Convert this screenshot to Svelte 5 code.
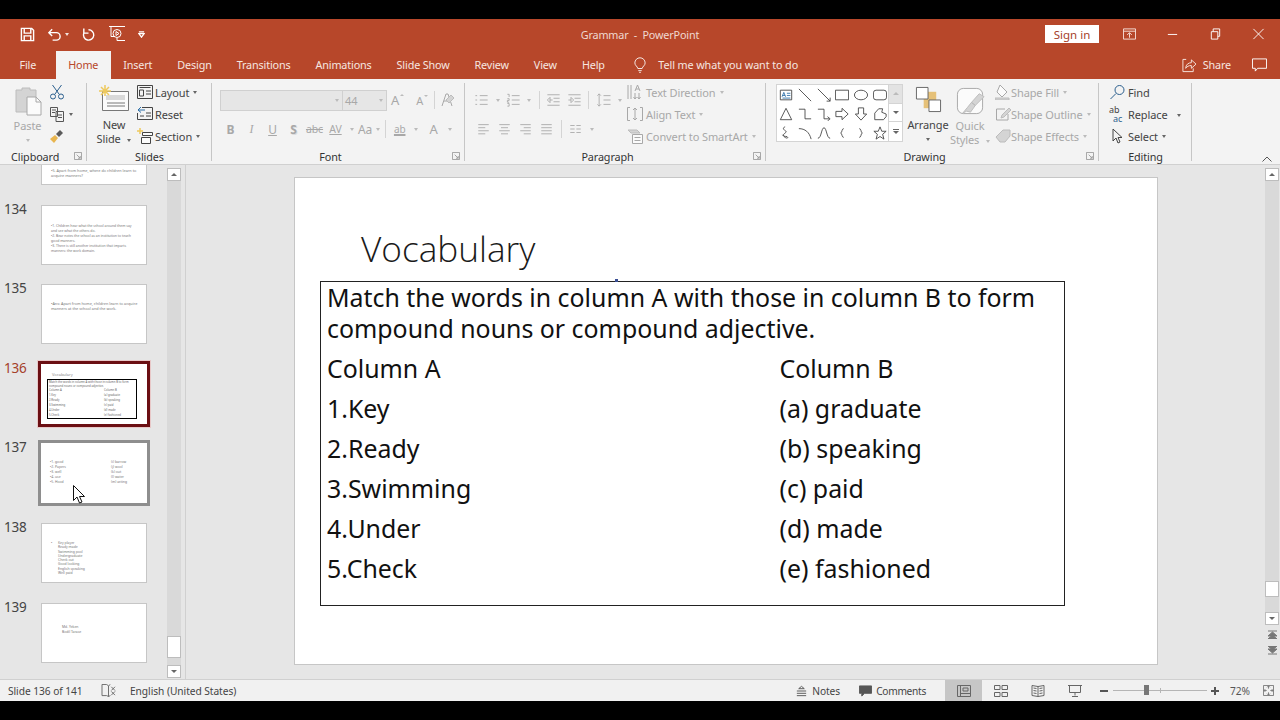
<script lang="ts">
  const tabs = ['File', 'Home', 'Insert', 'Design', 'Transitions', 'Animations', 'Slide Show', 'Review', 'View', 'Help'];
  const colA = ['Column A', '1.Key', '2.Ready', '3.Swimming', '4.Under', '5.Check'];
  const colB = ['Column B', '(a) graduate', '(b) speaking', '(c) paid', '(d) made', '(e) fashioned'];
</script>

{#snippet caret()}<i class="caret"></i>{/snippet}
{#snippet launcher()}
  <svg class="launch" viewBox="0 0 9 9"><path d="M.5.5h8v8h-8zM3 3l4 4M7 4.5V7H4.5" /></svg>
{/snippet}

<div class="band"></div>
<div class="app">
  <header class="titlebar">
    <div class="qat">
      <svg class="q" viewBox="0 0 16 16"><path d="M1.500 1.500h11l2 2v11h-13zM4.500 1.500v5h7v-5M4.500 14.500v-5h7v5" /></svg>
      <svg class="q undo" viewBox="0 0 16 16"><path d="M2 6h8a4 4 0 0 1 0 8H6M5.500 2.500 2 6l3.500 3.500" /></svg>
      <i class="caret light"></i>
      <svg class="q redo" viewBox="0 0 16 16"><path d="M8 3a5.500 5.500 0 1 1-5 3.500M3 1.500v5h5" /></svg>
      <svg class="q show" viewBox="0 0 18 18"><path d="M1 1.500h16M3 1.500v10h4M9 15.500h8M9 13v2.500M13 8.500a4 4 0 1 1-8 0 4 4 0 0 1 8 0zM8 6.500l3 2-3 2z" /></svg>
      <svg class="q cust" viewBox="0 0 8 8"><path d="M1 1h6M1 3h6L4 7z" /></svg>
    </div>
    <div class="doc">Grammar &nbsp;-&nbsp; PowerPoint</div>
    <div class="winctl">
      <button class="signin">Sign in</button>
      <svg class="w first" viewBox="0 0 14 12"><path d="M.5.500h13v11H.5zM.5 3h13M7 10V5M4.500 7 7 4.500 9.500 7" /></svg>
      <svg class="w" viewBox="0 0 14 12"><path d="M2 6.500h10" /></svg>
      <svg class="w" viewBox="0 0 14 12"><path d="M2.500 3.500h7v8h-7zM4.500 3.500v-3h7v8h-2" /></svg>
      <svg class="w" viewBox="0 0 14 12"><path d="M1.500.5 12.500 11.500M12.500.5 1.500 11.500" /></svg>
    </div>
  </header>

  <nav class="tabs">
    {#each tabs as t}
      <span class="tab" class:active={t === 'Home'}>{t}</span>
    {/each}
    <svg class="bulb" viewBox="0 0 14 18"><path d="M4.500 12.500C4 10 1 9 1 6a6 6 0 0 1 12 0c0 3-3 4-3.500 6.500zM5 15h4M6 17h2" /></svg>
    <span class="tell">Tell me what you want to do</span>
    <svg class="share" viewBox="0 0 16 16"><path d="M5 1.500H1.500v13h11V11M4.500 11c0-4 3-6 6-6V2l5 4.500-5 4.500V8c-3 0-4.500 1-6 3z" /></svg>
    <span class="sharetxt">Share</span>
    <svg class="talk" viewBox="0 0 16 14"><path d="M.5.500h15v10H6L3.500 13.500v-3h-3z" /></svg>
  </nav>

  <div class="ribbon">
    <section class="group clip">
      <div class="body">
        <div class="paste off">
          <svg class="big" viewBox="0 0 28 30">
            <path class="fillg" d="M2 4h6V2h8v2h6v22H2z" />
            <path class="fillw" d="M13 11h9l5 5v13H13z" />
            <path d="M22 11v5h5" />
          </svg>
          <span>Paste</span>
          {@render caret()}
        </div>
        <div class="stack">
          <div class="row"><svg class="i16 blue" viewBox="0 0 16 16"><path d="M3.500 1 10 10M12.500 1 6 10M6.500 12.500a2.500 2.500 0 1 1-5 0 2.500 2.500 0 0 1 5 0zM14.500 12.500a2.500 2.500 0 1 1-5 0 2.500 2.500 0 0 1 5 0z" /></svg></div>
          <div class="row"><svg class="i16" viewBox="0 0 16 16"><path d="M1.500 1.500h7v9h-7zM7 5.500h7.500v10H7zM3 4h4M3 6.500h3M9 9h4M9 11.500h4" /></svg>{@render caret()}</div>
          <div class="row"><svg class="i16" viewBox="0 0 16 16"><path class="fillgold" d="M1 11l5-4 3 3-4 5z" /><path class="filldark" d="M7 6l4-4 3 3-4 4z" /></svg></div>
        </div>
      </div>
      <div class="label"><span>Clipboard</span>{@render launcher()}</div>
    </section>

    <section class="group slides">
      <div class="body">
        <div class="newslide">
          <svg class="big wide" viewBox="0 0 30 26">
            <path class="fillw" d="M3.500 6.500h26v19h-26z" />
            <path class="fillg2" d="M7 10h19v5H7z" />
            <path d="M8 18h18M8 21h18" />
            <path class="sun" d="M6 0v11M0 6h12M2 2l8 8M10 2l-8 8" />
          </svg>
          <span>New</span>
          <span>Slide {@render caret()}</span>
        </div>
        <div class="stack">
          <div class="row"><svg class="i16" viewBox="0 0 16 16"><path d="M.5 1.500h15v13H.5zM2.500 3.500h11M2.500 6v6h4V6zM9 7h5M9 10h5" /></svg><span class="t">Layout</span>{@render caret()}</div>
          <div class="row"><svg class="i16" viewBox="0 0 16 16"><path class="blueline" d="M1 4l3-3M1 4l3 2.500M1 4h7" /><path d="M5 1.500h10.500v12H.5V7M3 10h4M9 7h5M9 10h5" /></svg><span class="t">Reset</span></div>
          <div class="row"><svg class="i16" viewBox="0 0 16 16"><path class="sun" d="M3 0v6M0 3h6" /><path class="fillw" d="M5.500 4.500h10v3h-10zM4.500 9.500h9v6h-9z" /></svg><span class="t">Section</span>{@render caret()}</div>
        </div>
      </div>
      <div class="label">Slides</div>
    </section>

    <section class="group font off">
      <div class="body col">
        <div class="row">
          <div class="field name"><i class="caret"></i></div>
          <div class="field size"><span>44</span><i class="caret"></i></div>
          <span class="grow up">A<i class="tri"></i></span>
          <span class="grow down">A<i class="tri dn"></i></span>
          <i class="vsep a"></i>
          <svg class="i16 clear" viewBox="0 0 16 16"><path d="M3 14 7 2h2l4 12M5 9h6" /><path class="fillg" d="M7 8l5-5 3 3-5 5z" /></svg>
        </div>
        <div class="row fmt">
          <b class="s">B</b><em class="s it">I</em><u class="s">U</u><span class="s shadow">S</span>
          <span class="s abc">abc</span>
          <span class="s av">AV</span>{@render caret()}
          <span class="aa">Aa</span>{@render caret()}
          <i class="vsep b"></i>
          <span class="s hl">ab</span>{@render caret()}
          <span class="s bigA">A</span>{@render caret()}
        </div>
      </div>
      <div class="label shifted"><span>Font</span>{@render launcher()}</div>
    </section>

    <section class="group para off">
      <div class="body">
        <div class="paraleft">
          <div class="row">
            <svg class="s17" viewBox="0 0 16 16"><path d="M6 3h9M6 8h9M6 13h9M1 3h2M1 8h2M1 13h2" /></svg><i class="cw16">{@render caret()}</i>
            <svg class="s17" viewBox="0 0 16 16"><path d="M6 3h9M6 8h9M6 13h9M1 1.500h2v3M1 6.500h2v2H1v2h2M1 12h2v3H1" /></svg><i class="cw14">{@render caret()}</i>
            <i class="vsep c"></i>
            <svg class="s21" viewBox="0 0 16 16"><path d="M1 2h14M8 6h7M8 10h7M1 14h14M1 8l3-3v6zM4 8h3" /></svg>
            <svg class="s21" viewBox="0 0 16 16"><path d="M1 2h14M8 6h7M8 10h7M1 14h14M7 8 4 5v6zM1 8h3" /></svg>
            <i class="vsep d"></i>
            <svg class="s21 ml" viewBox="0 0 16 16"><path d="M8 3h8M8 8h8M8 13h8M3 1v14M1 3l2-2 2 2M1 13l2 2 2-2" /></svg><i class="cw14">{@render caret()}</i>
          </div>
          <div class="row low">
            <svg class="s21" viewBox="0 0 16 16"><path d="M2 3h12M2 6.500h8M2 10h12M2 13.500h8" /></svg>
            <svg class="s21" viewBox="0 0 16 16"><path d="M2 3h12M4 6.500h8M2 10h12M4 13.500h8" /></svg>
            <svg class="s21" viewBox="0 0 16 16"><path d="M2 3h12M6 6.500h8M2 10h12M6 13.500h8" /></svg>
            <svg class="s21" viewBox="0 0 16 16"><path d="M2 3h12M2 6.500h12M2 10h12M2 13.500h12" /></svg>
            <i class="vsep e"></i>
            <svg class="s21" viewBox="0 0 16 16"><path d="M2 4h5M9 4h5M2 8h5M9 8h5M2 12h5M9 12h5" /></svg>
            {@render caret()}
          </div>
        </div>
        <div class="stack pstack">
          <div class="row"><svg class="i16" viewBox="0 0 16 16"><path d="M1 1v14M4 1v14M8 9v6M6.500 13 8 15l1.500-2M12 9v6M10.500 13l1.500 2 1.500-2M8 7l2.500-6L13 7M9 5h3" /></svg><span class="t">Text Direction</span>{@render caret()}</div>
          <div class="row"><svg class="i16" viewBox="0 0 16 16"><path d="M3 1.500H.5v13H3M13 1.500h2.500v13H13M8 2v12M6 4l2-2 2 2M6 12l2 2 2-2" /></svg><span class="t">Align Text</span>{@render caret()}</div>
          <div class="row"><svg class="i16" viewBox="0 0 16 16"><path class="fillg" d="M1 2h9l3 3H4z" /><path class="fillw" d="M5.500 6.500h10v9h-10z" /><path d="M7.500 9.500h6M7.500 12.500h6" /></svg><span class="t">Convert to SmartArt</span>{@render caret()}</div>
        </div>
      </div>
      <div class="label shifted"><span>Paragraph</span>{@render launcher()}</div>
    </section>

    <section class="group draw">
      <div class="body">
        <div class="gallery">
          <div class="shapes">
            <svg viewBox="0 0 16 16"><path d="M1.500 2.500h13v11h-13z" /><path class="blueline" d="M3.500 10 5.500 5l2 5M4 8.500h3M9 6h4M9 8.500h4M4 11.500h9" /></svg>
            <svg viewBox="0 0 16 16"><path d="M1 1l14 14" /></svg>
            <svg viewBox="0 0 16 16"><path d="M1 1l14 14M15 11v4h-4" /></svg>
            <svg viewBox="0 0 16 16"><path d="M.5 2.500h15v11H.5z" /></svg>
            <svg viewBox="0 0 16 16"><ellipse cx="8" cy="8" rx="7.500" ry="5.500" /></svg>
            <svg viewBox="0 0 16 16"><rect x=".5" y="2.500" width="15" height="11" rx="3" /></svg>
            <svg viewBox="0 0 16 16"><path d="M8 1.500l6.500 13h-13z" /></svg>
            <svg viewBox="0 0 16 16"><path d="M1 2.500h7v11h7" /></svg>
            <svg viewBox="0 0 16 16"><path d="M1 2.500h7v11h6M12 11l3 2.500-3 2.500" /></svg>
            <svg viewBox="0 0 16 16"><path d="M1 5h7V1.500L15 8l-7 6.500V11H1z" /></svg>
            <svg viewBox="0 0 16 16"><path d="M5 1h6v7h3.500L8 15 1.500 8H5z" /></svg>
            <svg viewBox="0 0 16 16"><path d="M2 14.500V7L6.500 2H11l-1 4 5 2v3l-3 3.500z" /></svg>
            <svg viewBox="0 0 16 16"><path d="M7 1C3 2 6 5 8 6S4 9 5 11s5 4 5 2-5 0-6-3" /></svg>
            <svg viewBox="0 0 16 16"><path d="M1 3c7 0 12 4 14 12" /></svg>
            <svg viewBox="0 0 16 16"><path d="M1 14C5 14 5 2 8 2s3 12 7 12" /></svg>
            <svg viewBox="0 0 16 16"><path d="M10 3C7.500 3 8.500 7 6.500 8c2 1 1 5 3.500 5" /></svg>
            <svg viewBox="0 0 16 16"><path d="M6 3c2.500 0 1.500 4 3.500 5-2 1-1 5-3.500 5" /></svg>
            <svg viewBox="0 0 16 16"><path d="M8 1l2 5h5l-4 3.500 1.500 5.500L8 12l-4.500 3L5 9.500 1 6h5z" /></svg>
          </div>
          <div class="scroller">
            <span class="sc dim"><i class="tri"></i></span>
            <span class="sc"><i class="tri dn"></i></span>
            <span class="sc more"><i class="bar"></i><i class="tri dn"></i></span>
          </div>
        </div>
        <div class="arrange">
          <svg class="big arr" viewBox="0 0 28 28">
            <path class="gold" d="M9 6h13v17H9z" />
            <path class="fillw2" d="M1.500 1.500h12v12h-12zM14.500 14.500h12v12h-12z" />
          </svg>
          <span>Arrange</span>
          {@render caret()}
        </div>
        <div class="quick off">
          <svg class="big qs" viewBox="0 0 30 30"><rect class="fillw" x="1.500" y="1.500" width="26" height="26" rx="6" /><path class="fillg" d="M29 10l-9 9-4-3 8-9zM16 16l4 3-5 7-4-1-4 2 5-6z" /></svg>
          <span>Quick</span>
          <span>Styles {@render caret()}</span>
        </div>
        <div class="stack shape off">
          <div class="row"><svg class="i16" viewBox="0 0 16 16"><path class="fillw" d="M5 1l7 7-5 5-5-5z" /><path class="fillg" d="M0 14h14v2H0z" /></svg><span class="t">Shape Fill</span>{@render caret()}</div>
          <div class="row"><svg class="i16" viewBox="0 0 16 16"><path d="M10 3H1.500v11H13V8" /><path class="fillg" d="M7 9l7-7 2 2-7 7-3 1z" /></svg><span class="t">Shape Outline</span>{@render caret()}</div>
          <div class="row"><svg class="i16" viewBox="0 0 16 16"><path class="fillg" d="M1 9l7-7h7v6l-5 6H5z" /></svg><span class="t">Shape Effects</span>{@render caret()}</div>
        </div>
      </div>
      <div class="label shifted"><span>Drawing</span>{@render launcher()}</div>
    </section>

    <section class="group edit">
      <div class="body">
        <div class="stack">
          <div class="row"><svg class="i16 blue" viewBox="0 0 16 16"><path d="M15 6a4.500 4.500 0 1 1-9 0 4.500 4.500 0 0 1 9 0zM7 9.500 1.500 15" /></svg><span class="t">Find</span></div>
          <div class="row"><span class="abac"><span>ab</span><span class="ac">ac</span></span><span class="t">Replace</span><span class="gapc">{@render caret()}</span></div>
          <div class="row"><svg class="i16" viewBox="0 0 16 16"><path d="M4 1v12l3-3 2 5 2-1-2-4.500h4z" /></svg><span class="t">Select</span>{@render caret()}</div>
        </div>
      </div>
      <div class="label">Editing</div>
    </section>

    <svg class="collapse" viewBox="0 0 10 6"><path d="M.5 5.500 5 1l4.500 4.500" /></svg>
  </div>

  <main class="work">
    <aside class="pane">
      <div class="list">
        <div class="item">
          <div class="thumb"><p class="tiny low">•5. Apart from home, where do children learn to<br />acquire manners?</p></div>
        </div>
        <div class="item">
          <span class="num">134</span>
          <div class="thumb"><p class="tiny top">•1. Children hear what the school around them say and see what the others do.<br />•2. Bear notes the school as an institution to teach good manners.<br />•3. There is still another institution that imparts manners: the work domain.</p></div>
        </div>
        <div class="item">
          <span class="num">135</span>
          <div class="thumb"><p class="tiny mid">•Ans: Apart from home, children learn to acquire manners at the school and the work.</p></div>
        </div>
        <div class="item current">
          <span class="num">136</span>
          <div class="thumb">
            <p class="mini-title">Vocabulary</p>
            <div class="mini-box">
              <p>Match the words in column A with those in column B to form compound nouns or compound adjective.</p>
              <div class="mini-grid">
                {#each colA as a, i}
                  <span>{a}</span><span>{colB[i]}</span>
                {/each}
              </div>
            </div>
          </div>
        </div>
        <div class="item hover">
          <span class="num">137</span>
          <div class="thumb two">
            <p class="tiny">•1. good<br />•2. Papers<br />•3. well<br />•4. use<br />•5. Hood</p>
            <p class="tiny">(i) barrow<br />(j) wool<br />(k) out<br />(l) water<br />(m) acting</p>
          </div>
        </div>
        <div class="item">
          <span class="num">138</span>
          <div class="thumb"><p class="tiny list138">Key player<br />Ready made<br />Swimming pool<br />Undergraduate<br />Check out<br />Good looking<br />English speaking<br />Well paid</p></div>
        </div>
        <div class="item">
          <span class="num">139</span>
          <div class="thumb"><p class="tiny list139">Md. Yeken<br />Bodil Tarase</p></div>
        </div>
      </div>
      <div class="vscroll pane-scroll">
        <span class="sb"><i class="tri"></i></span>
        <span class="fill"></span>
        <span class="knob"></span>
        <span class="sb down"><i class="tri dn"></i></span>
      </div>
    </aside>
    <div class="split"></div>

    <div class="stage">
      <article class="slide">
        <h1>Vocabulary</h1>
        <div class="box">
          <i class="handle"></i>
          <p class="intro">Match the words in column A with those in column B to form compound nouns or compound adjective.</p>
          <div class="cols">
            {#each colA as a, i}
              <span>{a}</span><span>{colB[i]}</span>
            {/each}
          </div>
        </div>
      </article>
      <div class="vscroll main-scroll">
        <span class="sb"><i class="tri"></i></span>
        <span class="fill"></span>
        <span class="knob"></span>
        <span class="fill short"></span>
        <span class="sb down"><i class="tri dn"></i></span>
        <svg class="pg" viewBox="0 0 9 9"><path d="M0 1h9M0 6l4.500-4L9 6zM0 9l4.500-4L9 9z" /></svg>
        <svg class="pg" viewBox="0 0 9 9"><path d="M0 8h9M0 3l4.500 4L9 3zM0 0l4.500 4L9 0z" /></svg>
      </div>
    </div>
  </main>

  <footer class="status">
    <span class="count">Slide 136 of 141</span>
    <svg class="book" viewBox="0 0 16 14"><path d="M1 .5h5l2 1.500v11.500L6 12.500H1zM8 2l2-1.500M8 13.500l2-1M11 3l4 4M15 3l-4 4M11 8l4 4M15 8l-4 4" /></svg>
    <span class="lang">English (United States)</span>
    <span class="notes"><svg class="st" viewBox="0 0 14 12"><path d="M2 11h10M2 8.500h10M2 6h10M4 3.500 7 1l3 2.500z" /></svg>Notes</span>
    <span class="comments"><svg class="st fillst" viewBox="0 0 14 12"><path d="M.5.500h13v8H6l-3 3v-3H.5z" /></svg>Comments</span>
    <span class="view on"><svg viewBox="0 0 14 12"><path d="M.5.500h13v11H.5zM3.500.5v11M3.500 8.500h10M6 3h5v3H6z" /></svg></span>
    <span class="view"><svg viewBox="0 0 14 12"><path d="M.5.500h5.500v4H.5zM8 .5h5.500v4H8zM.5 7.500h5.500v4H.5zM8 7.500h5.500v4H8z" /></svg></span>
    <span class="view"><svg viewBox="0 0 14 12"><path d="M7 1.500v10M7 1.500 1 .5v10l6 1 6-1V.5zM2.500 3 5.500 3.500M2.500 5.500l3 .5M2.500 8l3 .5M8.500 3.500l3-.5M8.500 6l3-.5M8.500 8.500l3-.5" /></svg></span>
    <span class="view"><svg viewBox="0 0 14 12"><path d="M0 .5h14M1.500.5v7h11v-7M7 7.500v3M4 11.500h6" /></svg></span>
    <span class="zoom-minus"></span>
    <span class="slider"><i class="mid"></i><i class="thumbz"></i></span>
    <span class="zoom-plus"></span>
    <span class="pct">72%</span>
    <svg class="fit" viewBox="0 0 12 12"><path d="M.5.500h11v11H.5zM6 1v3M4.500 2.500 6 1l1.500 1.500M6 11V8M4.500 9.500 6 11l1.500-1.500M1 6h3M2.500 4.500 1 6l1.500 1.500M11 6H8M9.500 4.500 11 6 9.500 7.500" /></svg>
  </footer>
</div>
<div class="band"></div>

<svg class="cursor" viewBox="0 0 12 19"><path d="M.5.500v15l3.500-3.500 2.500 6 2.500-1-2.500-5.500h5z" /></svg>

<style>
  :global(body) {
    background: #000;
    font-family: 'Noto Sans', 'Open Sans', sans-serif;
    overflow: hidden;
  }

  .band {
    height: 19px;
    background: #000;
  }

  .app {
    height: 682px;
    display: flex;
    flex-direction: column;
    background: #e6e6e6;
    color: #444;
    font-size: 11px;
    letter-spacing: -0.1px;
  }

  svg {
    fill: none;
    stroke: currentColor;
    stroke-width: 1;
    flex: none;
  }

  p {
    margin: 0;
  }

  /* title bar */
  .titlebar {
    height: 32px;
    box-sizing: border-box;
    padding-bottom: 2px;
    display: grid;
    grid-template-columns: 1fr auto 1fr;
    align-items: center;
    background: #b7472a;
    color: #f3e3dd;
  }

  .qat {
    display: flex;
    align-items: center;
    padding-left: 20px;
  }

  .q {
    width: 15px;
    height: 15px;
    color: #fff;
    stroke-width: 1.500;
  }

  .undo {
    margin-left: 12px;
  }

  .redo {
    margin-left: 12px;
  }

  .show {
    margin-left: 12px;
    width: 18px;
    height: 18px;
    stroke-width: 1;
  }

  .cust {
    width: 7px;
    height: 7px;
    margin-left: 12px;
  }

  .doc {
    font-size: 10.800px;
    letter-spacing: -0.15px;
    color: #f0d9d1;
  }

  .winctl {
    display: flex;
    align-items: center;
    justify-content: flex-end;
  }

  .signin {
    width: 54px;
    height: 18px;
    margin-right: 24px;
    padding: 0;
    border: 0;
    background: #fff;
    color: #a5412a;
    font: inherit;
    font-size: 11.500px;
  }

  .w {
    width: 13px;
    height: 12px;
    margin-right: 30px;
    color: #fff;
  }

  .w.first {
    color: #f7e3dc;
  }

  .w:last-child {
    margin-right: 15px;
  }

  /* tabs */
  .tabs {
    height: 28px;
    display: flex;
    align-items: stretch;
    padding-left: 7px;
    background: #b7472a;
    color: #f6e6e0;
    font-size: 10.800px;
    letter-spacing: -0.15px;
  }

  .tab {
    display: flex;
    align-items: center;
    padding: 0 12.500px 1px;
  }

  .tab:first-child {
    margin-right: 7px;
  }

  .tab.active {
    background: #f3f3f3;
    color: #b7472a;
  }

  .bulb {
    width: 12px;
    height: 17px;
    align-self: center;
    margin-left: 17px;
    color: #fff;
  }

  .tell {
    align-self: center;
    margin-left: 12px;
    padding-bottom: 1px;
    letter-spacing: -0.1px;
  }

  .share {
    width: 16px;
    height: 15px;
    align-self: center;
    margin-left: auto;
  }

  .sharetxt {
    align-self: center;
    margin-left: 6px;
    padding-bottom: 1px;
  }

  .talk {
    width: 15px;
    height: 14px;
    align-self: center;
    margin-left: 21px;
    margin-right: 13px;
    color: #fff;
  }

  /* ribbon */
  .ribbon {
    height: 86px;
    display: flex;
    position: relative;
    background: #f3f3f3;
    border-bottom: 1px solid #d0d0d0;
    box-sizing: border-box;
    flex: none;
  }

  .group {
    position: relative;
    padding-top: 1px;
    box-sizing: border-box;
    height: 85px;
  }

  .group::after {
    content: '';
    position: absolute;
    right: 0;
    top: 4px;
    bottom: 3px;
    width: 1px;
    background: #c6c6c6;
  }

  .clip { width: 87px; }
  .slides { width: 125px; }
  .font { width: 253px; }
  .para { width: 301px; }
  .draw { width: 333px; }
  .edit { width: 93px; }

  .body {
    height: 67px;
    display: flex;
  }

  .body.col {
    flex-direction: column;
  }

  .stack {
    padding-top: 1px;
  }

  .label {
    height: 18px;
    display: flex;
    align-items: center;
    justify-content: center;
    position: relative;
    color: #333;
    font-size: 10.800px;
  }

  .label.shifted {
    padding-right: 16px;
  }

  .clip .label {
    justify-content: flex-start;
    padding-left: 11px;
  }

  .font .label span,
  .para .label span {
    color: #333;
  }

  .launch {
    position: absolute;
    right: 5px;
    top: 5px;
    width: 8px;
    height: 8px;
    color: #999;
  }

  .row {
    height: 22px;
    display: flex;
    align-items: center;
    white-space: nowrap;
  }

  .t {
    margin-left: 3px;
  }

  .off {
    color: #a8a8a8;
  }

  .caret {
    display: inline-block;
    width: 0;
    height: 0;
    margin-left: 4px;
    border: 2.500px solid transparent;
    border-top: 3px solid #666;
    border-bottom: 0;
    vertical-align: middle;
  }

  .off .caret {
    border-top-color: #bbb;
  }

  .caret.light {
    border-top-color: #f3e3dd;
    margin-left: 3px;
  }

  .i16 {
    width: 16px;
    height: 16px;
  }

  .blue {
    color: #2b5f8e;
  }

  .big {
    display: block;
  }

  .fillg {
    fill: #d4d4d4;
    stroke: #bcbcbc;
  }

  .fillg2 {
    fill: #d9d9d9;
    stroke: none;
  }

  .fillw {
    fill: #fbfbfb;
  }

  .fillw2 {
    fill: #fff;
    stroke: #666;
  }

  .fillgold {
    fill: #e8b54f;
    stroke: none;
  }

  .filldark {
    fill: #5a5a5a;
    stroke: none;
  }

  .gold {
    fill: #e6c178;
    stroke: none;
  }

  .sun {
    stroke: #eec95c;
    stroke-width: 1.500;
  }

  .blueline {
    stroke: #2b6ea8;
  }

  /* clipboard */
  .clip .body {
    padding-left: 13px;
  }

  .paste {
    width: 29px;
    display: flex;
    flex-direction: column;
    align-items: center;
    color: #a8a8a8;
    padding-top: 6px;
    line-height: 14px;
  }

  .paste .big {
    width: 28px;
    height: 30px;
    margin-bottom: 3px;
  }

  .paste .caret {
    margin: 6px 0 0;
  }

  .clip .stack {
    margin-left: 7px;
  }

  .clip .row .i16 {
    margin-left: 0;
    color: #555;
  }

  .clip .row .blue {
    color: #2b5f8e;
  }

  /* slides */
  .slides .body {
    padding-left: 11px;
  }

  .newslide {
    width: 32px;
    display: flex;
    flex-direction: column;
    align-items: center;
    padding-top: 5px;
    line-height: 14px;
    white-space: nowrap;
    color: #444;
  }

  .wide {
    width: 30px;
    height: 26px;
    margin-bottom: 7px;
    color: #777;
  }

  .slides .stack {
    margin-left: 7px;
  }

  .slides .t {
    margin-left: 2px;
  }

  /* font */
  .font .body {
    padding: 9px 0 0 8px;
    box-sizing: border-box;
  }

  .field {
    height: 21px;
    box-sizing: border-box;
    border: 1px solid #d0d0d0;
    background: #e6e6e6;
    display: flex;
    align-items: center;
    justify-content: flex-end;
    padding-right: 3px;
  }

  .field.name {
    width: 123px;
  }

  .field.size {
    width: 44px;
    border-left: 0;
    justify-content: space-between;
    padding-left: 2px;
  }

  .grow {
    position: relative;
    font-size: 13px;
    line-height: 1;
  }

  .grow.up {
    margin-left: 4px;
  }

  .grow.down {
    margin-left: 12px;
    font-size: 11px;
  }

  .tri {
    display: inline-block;
    width: 0;
    height: 0;
    border: 3px solid transparent;
    border-bottom: 3px solid #666;
    border-top: 0;
  }

  .tri.dn {
    border-bottom: 0;
    border-top: 3px solid #666;
  }

  .grow .tri {
    border-bottom-color: #bbb;
    border-width: 0 2px 2px;
    vertical-align: top;
    margin-left: 1px;
  }

  .grow .tri.dn {
    border-top-color: #bbb;
    border-width: 2px 2px 0;
  }

  .vsep {
    display: block;
    width: 1px;
    height: 18px;
    background: #d4d4d4;
    flex: none;
  }

  .vsep.a {
    margin-left: 6px;
  }

  .clear {
    margin-left: 4px;
  }

  .fmt {
    margin-top: 7px;
  }

  .s {
    width: 21px;
    text-align: center;
    font-style: normal;
    flex: none;
    font-size: 12px;
  }

  .it {
    font-style: italic;
    font-family: 'Liberation Serif', serif;
  }

  .shadow {
    font-weight: 700;
    text-shadow: 1px 1px 0 #ddd;
  }

  .abc {
    font-size: 10.500px;
    text-decoration: line-through;
  }

  .av {
    font-size: 10.500px;
    text-decoration: underline;
  }

  .aa {
    margin-left: 4px;
    font-size: 12px;
  }

  .vsep.b {
    margin-left: 5px;
    margin-right: 3px;
  }

  .hl {
    font-size: 10px;
    text-decoration: underline;
    text-decoration-thickness: 2px;
  }

  .bigA {
    margin-left: 5px;
    font-size: 13px;
  }

  /* paragraph */
  .para .body {
    padding-left: 8px;
  }

  .paraleft {
    width: 154px;
    flex: none;
    padding-top: 9px;
  }

  .row.low {
    margin-top: 7px;
  }

  .s17 {
    width: 15px;
    height: 14px;
    padding: 0 1px;
  }

  .s21 {
    width: 16px;
    height: 14px;
    padding: 0 2.500px;
  }

  .cw16 {
    width: 16px;
    display: flex;
    justify-content: center;
  }

  .cw14 {
    width: 14px;
    display: flex;
    justify-content: center;
  }

  .cw16 .caret,
  .cw14 .caret {
    margin: 0;
  }

  .vsep.c {
    margin: 0 3px;
  }

  .vsep.d {
    margin: 0 2px 0 3px;
  }

  .s21.ml {
    margin-left: 2px;
  }

  .vsep.e {
    margin: 0 3px 0 4px;
  }

  .pstack .t {
    margin-left: 3px;
  }

  /* drawing */
  .draw .body {
    padding-left: 10px;
  }

  .gallery {
    width: 127px;
    height: 58px;
    margin-top: 4px;
    box-sizing: border-box;
    border: 1px solid #d4d4d4;
    background: #fff;
    display: flex;
    flex: none;
  }

  .shapes {
    width: 111px;
    display: grid;
    grid-template-columns: repeat(6, 18.700px);
    grid-auto-rows: 19px;
    align-items: center;
    justify-items: center;
    box-sizing: border-box;
    color: #444;
  }

  .shapes svg {
    width: 14px;
    height: 14px;
  }

  .scroller {
    width: 14px;
    display: flex;
    flex-direction: column;
    margin-left: auto;
    border-left: 1px solid #d4d4d4;
  }

  .sc {
    height: 19px;
    display: flex;
    flex-direction: column;
    gap: 1px;
    align-items: center;
    justify-content: center;
    border-bottom: 1px solid #d4d4d4;
    box-sizing: border-box;
    background: #fff;
  }

  .sc.dim {
    background: #e3e3e3;
  }

  .sc.dim .tri {
    border-bottom-color: #bbb;
  }

  .sc.more {
    border-bottom: 0;
  }

  .bar {
    display: block;
    width: 6px;
    height: 1px;
    background: #666;
  }

  .arrange,
  .quick {
    width: 44px;
    flex: none;
    display: flex;
    flex-direction: column;
    align-items: center;
    line-height: 14px;
    white-space: nowrap;
  }

  .arrange {
    margin-left: 3px;
    padding-top: 6px;
  }

  .arr {
    width: 27px;
    height: 27px;
    margin-bottom: 5px;
  }

  .arrange .caret {
    margin: 6px 0 0;
  }

  .quick {
    margin-left: -2px;
    padding-top: 7px;
  }

  .qs {
    width: 29px;
    height: 29px;
    margin-bottom: 3px;
  }

  .shape {
    margin-left: 3px;
  }

  .shape .t {
    margin-left: 0;
  }

  /* editing */
  .edit .body {
    padding-left: 10px;
  }

  .edit .t {
    margin-left: 3px;
  }

  .abac {
    width: 16px;
    display: flex;
    flex-direction: column;
    font-size: 9px;
    line-height: 9px;
    color: #444;
  }

  .ac {
    color: #2b5f8e;
    padding-left: 4px;
  }

  .gapc {
    margin-left: 5px;
  }

  .collapse {
    position: absolute;
    right: 8px;
    top: 77px;
    width: 10px;
    height: 6px;
    color: #555;
  }

  /* workspace */
  .work {
    flex: 1;
    min-height: 0;
    display: flex;
  }

  .pane {
    width: 181px;
    flex: none;
    display: flex;
    overflow: hidden;
  }

  .list {
    width: 167px;
    flex: none;
    overflow: hidden;
  }

  .item {
    height: 79.600px;
    display: flex;
    position: relative;
    padding-left: 41px;
    box-sizing: border-box;
  }

  .item:first-child {
    margin-top: -40px;
  }

  .num {
    position: absolute;
    left: 4px;
    top: -5px;
    font-size: 13.500px;
    letter-spacing: -0.2px;
    color: #444;
    line-height: 18px;
  }

  .thumb {
    width: 106px;
    height: 60px;
    margin-top: 0;
    box-sizing: border-box;
    background: #fff;
    border: 1px solid #c6c6c6;
    overflow: hidden;
    flex: none;
    position: relative;
  }

  .current .num {
    color: #a5412a;
  }

  .current .thumb {
    outline: 3px solid #6b0f13;
    outline-offset: 0;
    box-shadow: 0 0 0 4px #e8c8c8;
    border: 0;
  }

  .hover .thumb {
    outline: 3px solid #8e8e8e;
    border: 0;
  }

  .tiny {
    font-size: 3.400px;
    line-height: 5px;
    color: #777;
    letter-spacing: 0;
  }

  .tiny.low {
    margin: 42px 0 0 9px;
    line-height: 5px;
    font-size: 3.800px;
  }

  .tiny.top {
    margin: 17px 8px 0 9px;
  }

  .tiny.mid {
    margin: 16px 8px 0 9px;
    font-size: 3.800px;
  }

  .two {
    display: flex;
    justify-content: space-between;
    padding: 16px 20px 0 9px;
  }

  .list138 {
    margin: 17px 0 0 16px;
    line-height: 4.300px;
  }

  .list138::before {
    content: '•';
    position: absolute;
    left: 9px;
    top: 17px;
  }

  .list139 {
    margin: 20px 0 0 20px;
  }

  .mini-title {
    margin: 8px 0 0 11px;
    font-size: 4px;
    line-height: 6px;
    color: #888;
    letter-spacing: 0;
  }

  .mini-box {
    margin: 1px 10px 0 6px;
    height: 40px;
    border: 1px solid #000;
    font-size: 2.800px;
    line-height: 3.800px;
    color: #666;
    padding: 1px;
    box-sizing: border-box;
    overflow: hidden;
    letter-spacing: 0;
  }

  .mini-grid {
    display: grid;
    grid-template-columns: 55px 1fr;
    row-gap: 1.200px;
    margin-top: 1px;
  }

  .vscroll {
    width: 14px;
    flex: none;
    display: flex;
    flex-direction: column;
    background: #d9d9d9;
  }

  .pane-scroll {
    margin-top: 3px;
    height: 510px;
  }

  .sb {
    height: 13px;
    box-sizing: border-box;
    border: 1px solid #bdbdbd;
    background: #fff;
    display: flex;
    align-items: center;
    justify-content: center;
    flex: none;
  }

  .fill {
    flex: 1;
  }

  .fill.short {
    flex: 0 0 15px;
  }

  .knob {
    height: 22px;
    box-sizing: border-box;
    border: 1px solid #bdbdbd;
    background: #fff;
    flex: none;
  }

  .pane-scroll .knob {
    margin-bottom: 7px;
  }

  .split {
    width: 5px;
    flex: none;
    margin-top: 0;
    border-right: 1px solid #d0d0d0;
    border-left: 0;
    box-sizing: border-box;
  }

  .stage {
    flex: 1;
    display: flex;
    align-items: flex-start;
    padding: 12px 1px 0 108px;
    background: #e6e6e6;
  }

  .slide {
    width: 864px;
    height: 488px;
    box-sizing: border-box;
    border: 1px solid #c6c6c6;
    background: #fff;
    padding: 47px 0 0 25px;
    color: #111;
    flex: none;
    letter-spacing: 0;
  }

  h1 {
    margin: -1px 0 9px 41px;
    font-family: 'Open Sans', 'Noto Sans', sans-serif;
    font-weight: 300;
    font-size: 35.200px;
    line-height: 48px;
    color: #1a1a1a;
  }

  .box {
    width: 745px;
    height: 325px;
    box-sizing: border-box;
    border: 1px solid #222;
    padding: 0 6px;
    position: relative;
    font-size: 24.900px;
    line-height: 31px;
    color: #111;
  }

  .handle {
    position: absolute;
    left: 294px;
    top: -3px;
    width: 3px;
    height: 3px;
    background: #3a4f94;
  }

  .intro {
    margin-bottom: 9px;
  }

  .cols {
    display: grid;
    grid-template-columns: 452.500px 1fr;
    row-gap: 9px;
  }

  .main-scroll {
    margin-left: 107px;
    margin-top: -9px;
    height: 494px;
    background: none;
  }

  .main-scroll .fill,
  .main-scroll .fill.short {
    background: #d9d9d9;
  }

  .main-scroll .knob {
    background: #fff;
    height: 16px;
  }

  .main-scroll .sb.down {
    margin-bottom: 5px;
  }

  .pg {
    width: 9px;
    height: 9px;
    align-self: center;
    margin-bottom: 7px;
    color: #777;
    fill: #777;
  }

  /* status bar */
  .status {
    height: 22px;
    flex: none;
    box-sizing: border-box;
    border-top: 1px solid #d0d0d0;
    background: #f1f1f1;
    display: flex;
    align-items: center;
    padding-left: 8px;
    font-size: 10.200px;
    letter-spacing: -0.05px;
    color: #444;
  }

  .count {
    width: 93px;
  }

  .book {
    width: 15px;
    height: 13px;
    color: #666;
  }

  .lang {
    margin-left: 14px;
  }

  .notes {
    margin-left: auto;
    display: flex;
    align-items: center;
    gap: 4px;
  }

  .st {
    width: 13px;
    height: 12px;
    color: #555;
  }

  .fillst {
    fill: #555;
  }

  .comments {
    margin-left: 19px;
    margin-right: 19px;
    display: flex;
    align-items: center;
    gap: 4px;
    letter-spacing: -0.3px;
  }

  .view {
    width: 37px;
    height: 21px;
    display: flex;
    align-items: center;
    justify-content: center;
    color: #666;
  }

  .view.on {
    background: #c6c6c6;
  }

  .view svg {
    width: 14px;
    height: 12px;
  }

  .zoom-minus,
  .zoom-plus {
    position: relative;
    width: 8px;
    height: 2px;
    background: #555;
    margin-left: 7px;
  }

  .zoom-plus::after {
    content: '';
    position: absolute;
    left: 3px;
    top: -3px;
    width: 2px;
    height: 8px;
    background: #555;
  }

  .slider {
    position: relative;
    width: 94px;
    height: 1px;
    margin-left: 5px;
    background: #b5b5b5;
  }

  .slider .mid {
    position: absolute;
    left: 47px;
    top: -2px;
    width: 1px;
    height: 5px;
    background: #b5b5b5;
  }

  .thumbz {
    position: absolute;
    left: 31px;
    top: -5px;
    width: 5px;
    height: 10px;
    background: #777;
  }

  .zoom-plus {
    margin-left: 4px;
  }

  .pct {
    margin-left: 11px;
    color: #555;
  }

  .fit {
    width: 11px;
    height: 11px;
    margin-left: 13px;
    margin-right: 6px;
    color: #777;
  }

  .cursor {
    position: absolute;
    left: 73px;
    top: 485px;
    width: 12px;
    height: 19px;
    fill: #fff;
    stroke: #111;
  }
</style>
